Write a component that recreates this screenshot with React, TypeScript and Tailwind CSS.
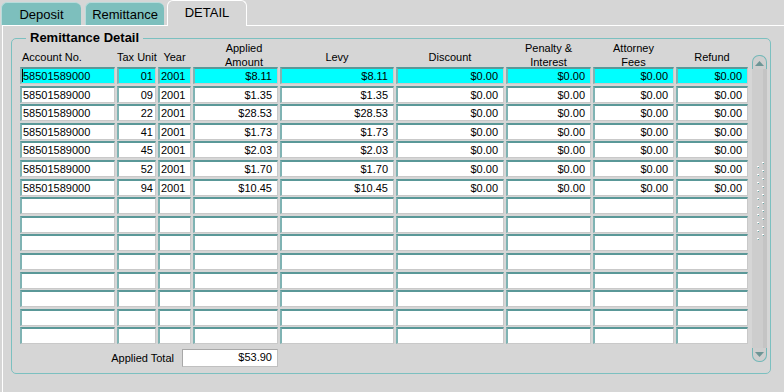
import React from "react";

type Col = { w: string; align: "left" | "right"; pad: string };

const cols: Col[] = [
  { w: "w-[95px]", align: "left", pad: "pl-[1px]" },
  { w: "w-[39px]", align: "right", pad: "pr-[2px]" },
  { w: "w-[33px]", align: "left", pad: "pl-[1px]" },
  { w: "w-[85px]", align: "right", pad: "pr-[5px]" },
  { w: "w-[114px]", align: "right", pad: "pr-[5px]" },
  { w: "w-[108px]", align: "right", pad: "pr-[5px]" },
  { w: "w-[85px]", align: "right", pad: "pr-[5px]" },
  { w: "w-[81px]", align: "right", pad: "pr-[5px]" },
  { w: "w-[72px]", align: "right", pad: "pr-[5px]" },
];

const data: string[][] = [
  ["58501589000", "01", "2001", "$8.11", "$8.11", "$0.00", "$0.00", "$0.00", "$0.00"],
  ["58501589000", "09", "2001", "$1.35", "$1.35", "$0.00", "$0.00", "$0.00", "$0.00"],
  ["58501589000", "22", "2001", "$28.53", "$28.53", "$0.00", "$0.00", "$0.00", "$0.00"],
  ["58501589000", "41", "2001", "$1.73", "$1.73", "$0.00", "$0.00", "$0.00", "$0.00"],
  ["58501589000", "45", "2001", "$2.03", "$2.03", "$0.00", "$0.00", "$0.00", "$0.00"],
  ["58501589000", "52", "2001", "$1.70", "$1.70", "$0.00", "$0.00", "$0.00", "$0.00"],
  ["58501589000", "94", "2001", "$10.45", "$10.45", "$0.00", "$0.00", "$0.00", "$0.00"],
];

const rows: string[][] = [
  ...data,
  ...Array.from({ length: 8 }, () => Array(9).fill("")),
];

function Cell({ col, text, cyan, caret }: { col: Col; text: string; cyan: boolean; caret?: boolean }) {
  return (
    <div
      className={`${col.w} ${col.pad} ${col.align === "right" ? "text-right" : "text-left"} ${
        cyan ? "bg-[#00ffff]" : "bg-white"
      } relative h-[17px] shrink-0 box-border border-t-2 border-l-2 border-r border-b border-t-[#5a9898] border-l-[#7fb3b3] border-r-[#c9c9c9] border-b-[#c9c9c9] leading-[14px] whitespace-nowrap overflow-hidden`}
    >
      {caret && <span className="absolute left-0 top-0 w-[1px] h-[13px] bg-black" />}
      {text}
    </div>
  );
}

function Grip() {
  const ys = [0, 8, 16, 24, 32, 40, 48, 56, 64, 72];
  return (
    <svg width="15" height="80" viewBox="0 0 15 80">
      {ys.map((y) => (
        <g key={y}>
          <rect x="5" y={y + 4} width="2" height="1" fill="#ffffff" />
          <rect x="6" y={y + 5} width="1" height="1" fill="#6aa9a9" />
          <rect x="10" y={y} width="2" height="1" fill="#ffffff" />
          <rect x="11" y={y + 1} width="1" height="1" fill="#6aa9a9" />
        </g>
      ))}
    </svg>
  );
}

function Scrollbar() {
  return (
    <div className="ml-[4px] mt-[14px] w-[15px] h-[307px] flex flex-col">
      <div className="h-[14px] shrink-0 rounded-t-[7px] border border-b-0 border-[#73b8b8] bg-[#cfcfcf] flex items-center justify-center pt-[1px]">
        <svg width="9" height="5" viewBox="0 0 9 5">
          <polygon points="4.5,0 9,5 0,5" fill="#6d9595" />
        </svg>
      </div>
      <div className="flex-1 bg-[#cdcdcd] border-r-[4px] border-r-[#c4c4c4] flex flex-col">
        <div className="h-[93px]" />
        <div className="-mr-[4px]">
          <Grip />
        </div>
      </div>
      <div className="h-[14px] shrink-0 rounded-b-[7px] border border-t-0 border-[#73b8b8] bg-[#cfcfcf] flex items-center justify-center pb-[1px]">
        <svg width="9" height="5" viewBox="0 0 9 5">
          <polygon points="0,0 9,0 4.5,5" fill="#6d9595" />
        </svg>
      </div>
    </div>
  );
}

function Header() {
  return (
    <div className="flex gap-[2px] h-[26px] leading-[14px] text-[11px]">
      <div className="w-[95px] shrink-0 pl-[2px] pt-[9px]">Account No.</div>
      <div className="w-[39px] shrink-0 text-center pt-[9px] whitespace-nowrap">Tax Unit</div>
      <div className="w-[33px] shrink-0 text-center pt-[9px]">Year</div>
      <div className="w-[85px] shrink-0 text-center pl-[17px]">
        Applied
        <br />
        Amount
      </div>
      <div className="w-[114px] shrink-0 text-center pt-[9px]">Levy</div>
      <div className="w-[108px] shrink-0 text-center pt-[9px]">Discount</div>
      <div className="w-[85px] shrink-0 text-center">
        Penalty &amp;
        <br />
        Interest
      </div>
      <div className="w-[81px] shrink-0 text-center">
        Attorney
        <br />
        Fees
      </div>
      <div className="w-[72px] shrink-0 text-center pt-[9px]">Refund</div>
    </div>
  );
}

export default function App() {
  return (
    <div className="w-[784px] h-[392px] bg-[#d6d6d6] overflow-hidden font-['Liberation_Sans',Arial,sans-serif] text-[11px] text-black flex flex-col">
      {/* Tabs */}
      <div className="h-[25px] shrink-0 flex items-end pl-[1px] relative z-10">
        <div className="w-[80px] h-[23px] rounded-t-[6px] bg-[#7dbfbd] border-l border-t border-[#b7dcdb] text-[13px] flex items-center justify-center pt-[1px]">
          Deposit
        </div>
        <div className="ml-[4px] w-[79px] h-[23px] rounded-t-[6px] bg-[#7dbfbd] border-l border-t border-[#b7dcdb] text-[13px] flex items-center justify-center pt-[1px]">
          Remittance
        </div>
        <div className="ml-[3px] w-[80px] h-[26px] -mb-[1px] rounded-t-[6px] bg-[#d6d6d6] border-l border-t border-r border-white text-[13px] flex items-center justify-center pb-[1px]">
          DETAIL
        </div>
      </div>
      {/* Panel */}
      <div className="flex-1 ml-[2px] border-l border-t border-white">
        <div className="ml-[8px] mt-[12px] w-[760px] h-[336px] border border-[#7cc0c0] rounded-[5px] relative">
          <div className="absolute -top-[9px] left-[14px] px-[4px] bg-[#d6d6d6] font-bold text-[13px] leading-[16px]">
            Remittance Detail
          </div>
          <div className="flex items-start pl-[8px] pt-[2px]">
            <div className="flex flex-col">
              <Header />
              <div className="flex flex-col gap-[1.6px]">
                {rows.map((r, i) => (
                  <div key={i} className="flex gap-[2px]">
                    {cols.map((c, j) => (
                      <Cell key={j} col={c} text={r[j]} cyan={i === 0} caret={i === 0 && j === 0} />
                    ))}
                  </div>
                ))}
              </div>
              <div className="flex items-center mt-[5px]">
                <div className="w-[162px] text-right pr-[8px] leading-[14px]">Applied Total</div>
                <div className="w-[96px] h-[18px] bg-white border border-[#c0c0c0] border-t-[#a8a8a8] border-l-[#a8a8a8] text-right pr-[5px] leading-[15px]">
                  $53.90
                </div>
              </div>
            </div>
            <Scrollbar />
          </div>
        </div>
      </div>
    </div>
  );
}
